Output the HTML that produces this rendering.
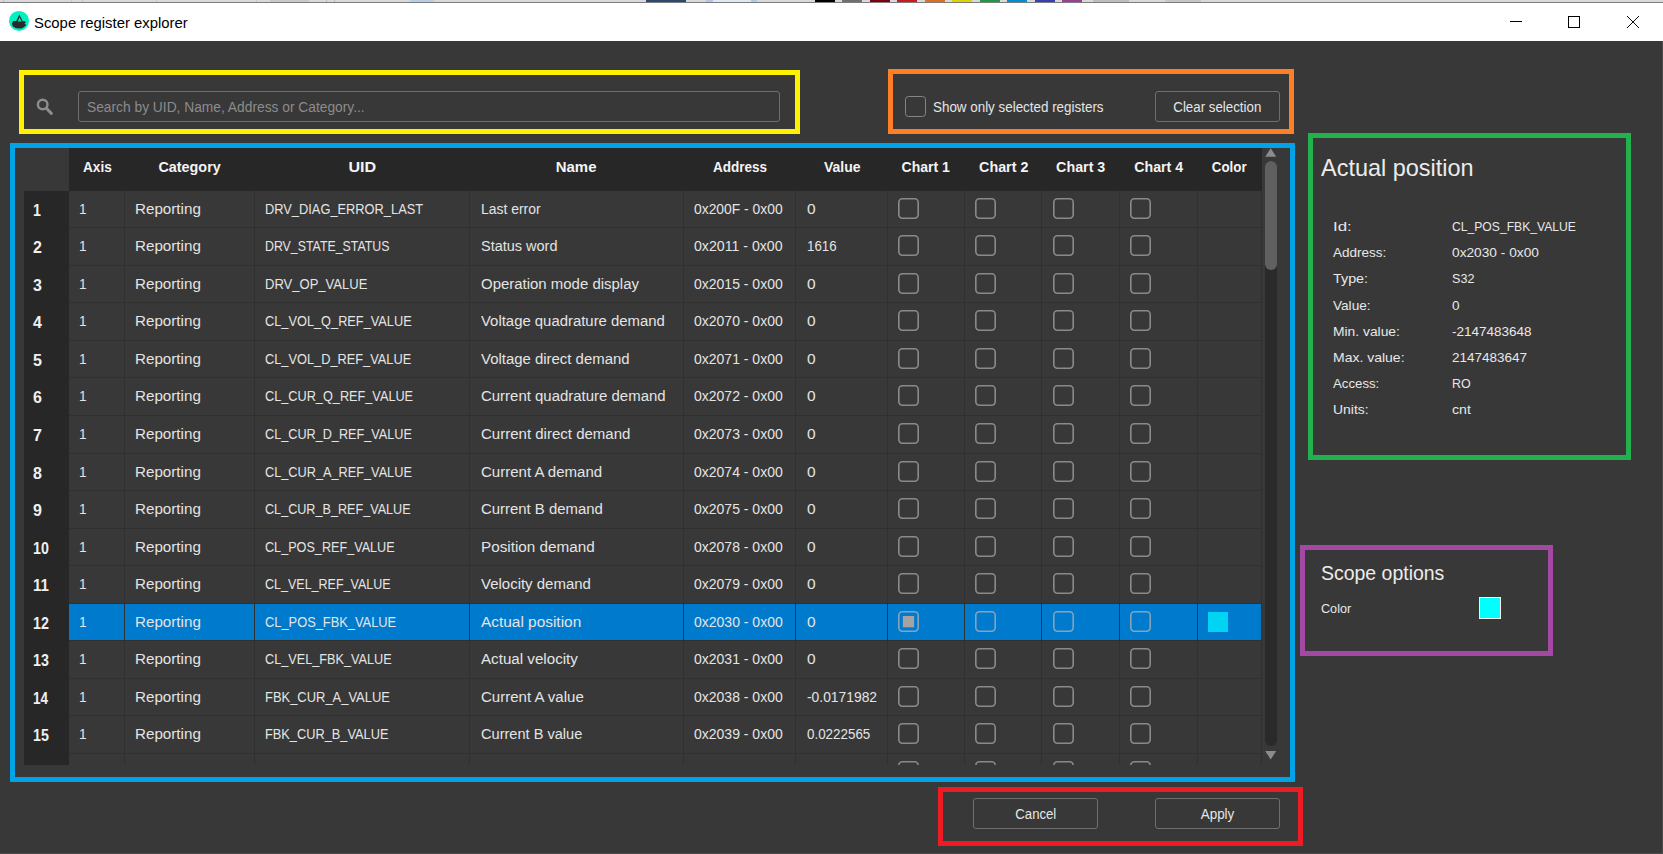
<!DOCTYPE html>
<html lang="en"><head><meta charset="utf-8"><title>Scope register explorer</title>
<style>
*{box-sizing:border-box;margin:0;padding:0}
html,body{width:1663px;height:854px;overflow:hidden;background:#383838}
body{position:relative;font-family:"Liberation Sans","DejaVu Sans",sans-serif;color:#e4e4e4;font-size:15px}
.abs{position:absolute}
.box{position:absolute;border:5px solid}
.t{position:absolute;white-space:nowrap;line-height:1}
.cell{position:absolute;top:0;height:100%;border-right:1px solid #303030;border-bottom:1px solid #303030;white-space:nowrap;padding-left:10px}
.row{position:absolute;left:69px;width:1192.5px;height:37.5px;line-height:35.6px;font-size:15.5px}
.row.sel{background:#007acd}
.rh{position:absolute;left:24px;width:45px;height:37.5px;line-height:39px;background:#272727;font-weight:bold;font-size:16px;padding-left:9px;color:#f0f0f0}
.cb{position:absolute;width:21px;height:21px;top:7.4px;left:10.5px;overflow:visible}
.hd{position:absolute;top:148px;height:43px;line-height:38px;text-align:center;font-weight:bold;font-size:15.5px;color:#f4f4f4;background:#272727}
.btn{position:absolute;height:31px;border:1px solid #6e6e6e;border-radius:3px;text-align:center;line-height:30px;font-size:14px;color:#e6e6e6}
.lbl{position:absolute;font-size:13.5px;line-height:16px;white-space:nowrap;color:#e8e8e8}
</style></head><body>

<div class="abs" style="left:0;top:0;width:1663px;height:2px;background:#d9d9d9"></div>
<div class="abs" style="left:815px;top:0;width:20px;height:2px;background:#000000"></div>
<div class="abs" style="left:842px;top:0;width:20px;height:2px;background:#6f6f6f"></div>
<div class="abs" style="left:870px;top:0;width:20px;height:2px;background:#7a0012"></div>
<div class="abs" style="left:897px;top:0;width:20px;height:2px;background:#cc1b1f"></div>
<div class="abs" style="left:925px;top:0;width:20px;height:2px;background:#e07020"></div>
<div class="abs" style="left:952px;top:0;width:20px;height:2px;background:#e0d400"></div>
<div class="abs" style="left:980px;top:0;width:20px;height:2px;background:#1e9a44"></div>
<div class="abs" style="left:1007px;top:0;width:20px;height:2px;background:#0090d0"></div>
<div class="abs" style="left:1035px;top:0;width:20px;height:2px;background:#3a40b0"></div>
<div class="abs" style="left:1062px;top:0;width:20px;height:2px;background:#9a409a"></div>
<div class="abs" style="left:3px;top:0;width:1px;height:2px;background:#c2c2c2"></div>
<div class="abs" style="left:71px;top:0;width:1px;height:2px;background:#c6c6c6"></div>
<div class="abs" style="left:82px;top:0;width:1px;height:2px;background:#c6c6c6"></div>
<div class="abs" style="left:156px;top:0;width:1px;height:2px;background:#c6c6c6"></div>
<div class="abs" style="left:256px;top:0;width:1px;height:2px;background:#c6c6c6"></div>
<div class="abs" style="left:270px;top:0;width:39px;height:2px;background:#c9c9c9"></div>
<div class="abs" style="left:326px;top:0;width:1px;height:2px;background:#bdbdbd"></div>
<div class="abs" style="left:334px;top:0;width:1px;height:2px;background:#bdbdbd"></div>
<div class="abs" style="left:410px;top:0;width:24px;height:2px;background:#b9cdea"></div>
<div class="abs" style="left:646px;top:0;width:40px;height:2px;background:#2c4a70"></div>
<div class="abs" style="left:706px;top:0;width:51px;height:2px;background:#b4c8e6"></div>
<div class="abs" style="left:713px;top:0;width:38px;height:2px;background:#dfe8f4"></div>
<div class="abs" style="left:1093px;top:0;width:36px;height:2px;background:#bdbdbd"></div>
<div class="abs" style="left:1165px;top:0;width:36px;height:2px;background:#c6c6c6"></div>
<div class="abs" style="left:0;top:2px;width:1663px;height:1px;background:#7c7c7c"></div>
<div class="abs" style="left:0;top:3px;width:1663px;height:38px;background:#ffffff"></div>
<svg class="abs" style="left:8px;top:10px" width="22" height="22" viewBox="0 0 22 22">
<defs><clipPath id="cc"><circle cx="11" cy="11" r="10"/></clipPath></defs>
<circle cx="11" cy="10.9" r="10" fill="#00f0c0"/>
<g clip-path="url(#cc)"><path fill-rule="evenodd" d="M11.3 4.6 L8.3 11.1 L5.2 10.9 L3.9 13.6 Q4.2 16 5.7 17 Q8 18.6 11 18.6 Q13.5 18.6 15.5 17.4 Q17.2 16.4 18.2 15.1 L16.5 13.6 L18 12.5 L16.8 11.2 L14.7 11.3 Z M11.5 7.3 L9.8 11.6 L13.5 11.6 Z" fill="#2a2a2a"/></g>
</svg>
<div class="t" style="left:34px;top:14.5px;font-size:15.5px;color:#000"><span style="display:inline-block;transform:scaleX(0.959);transform-origin:left center;">Scope register explorer</span></div>
<svg class="abs" style="left:1500px;top:10px" width="150" height="24" viewBox="0 0 150 24" shape-rendering="crispEdges">
<path d="M10 11.5 H22" stroke="#000" stroke-width="1" fill="none"/>
<rect x="68.5" y="6.5" width="11" height="11" stroke="#000" stroke-width="1" fill="none"/>
<path d="M127 6 L139 18 M139 6 L127 18" stroke="#000" stroke-width="0.95" fill="none" shape-rendering="geometricPrecision"/>
</svg>
<div class="box" style="left:19px;top:70px;width:781px;height:64px;border-color:#fff200"></div>
<div class="box" style="left:888px;top:69px;width:406px;height:65px;border-color:#ff7f27"></div>
<div class="box" style="left:10px;top:143px;width:1285px;height:639px;border-color:#00a2e8"></div>
<div class="box" style="left:1308px;top:133px;width:323px;height:327px;border-color:#22b14c"></div>
<div class="box" style="left:1300px;top:545px;width:253px;height:111px;border-color:#a349a4"></div>
<div class="box" style="left:938px;top:787px;width:365px;height:59px;border-color:#ed1c24"></div>
<svg class="abs" style="left:34px;top:96px" width="22" height="22" viewBox="0 0 22 22">
<circle cx="8.7" cy="8.5" r="4.8" stroke="#8e8e8e" stroke-width="2.4" fill="none"/>
<path d="M12.4 12.3 L17.3 17.4" stroke="#8e8e8e" stroke-width="3" stroke-linecap="round"/></svg>
<div class="abs" style="left:78px;top:91px;width:702px;height:31px;border:1px solid #6e6e6e;border-radius:3px"></div>
<div class="t" style="left:87px;top:100px;font-size:14px;color:#8c8c8c"><span style="display:inline-block;transform:scaleX(0.984);transform-origin:left center;">Search by UID, Name, Address or Category...</span></div>
<div class="abs" style="left:905px;top:96px;width:21px;height:21px;border:1px solid #858585;border-radius:3.5px"></div>
<div class="t" style="left:933px;top:99.5px;font-size:14px;color:#e6e6e6"><span style="display:inline-block;transform:scaleX(0.957);transform-origin:left center;">Show only selected registers</span></div>
<div class="btn" style="left:1155px;top:91px;width:125px"><span style="display:inline-block;transform:scaleX(0.950);transform-origin:center center;">Clear selection</span></div>
<div class="abs" style="left:15px;top:148px;width:1246.5px;height:617px;overflow:hidden">
<div class="abs" style="left:-15px;top:-148px;width:1663px;height:854px">
<div class="hd" style="left:69px;width:56px"><span style="display:inline-block;transform:scaleX(0.879);transform-origin:center center;">Axis</span></div>
<div class="hd" style="left:125px;width:129.5px"><span style="display:inline-block;transform:scaleX(0.926);transform-origin:center center;">Category</span></div>
<div class="hd" style="left:254.5px;width:215.0px"><span style="display:inline-block;transform:scaleX(1.038);transform-origin:center center;">UID</span></div>
<div class="hd" style="left:469.5px;width:214.0px"><span style="display:inline-block;transform:scaleX(0.963);transform-origin:center center;">Name</span></div>
<div class="hd" style="left:683.5px;width:112.5px"><span style="display:inline-block;transform:scaleX(0.873);transform-origin:center center;">Address</span></div>
<div class="hd" style="left:796px;width:91.5px"><span style="display:inline-block;transform:scaleX(0.903);transform-origin:center center;">Value</span></div>
<div class="hd" style="left:887.5px;width:77.0px"><span style="display:inline-block;transform:scaleX(0.904);transform-origin:center center;">Chart 1</span></div>
<div class="hd" style="left:964.5px;width:77.5px"><span style="display:inline-block;transform:scaleX(0.923);transform-origin:center center;">Chart 2</span></div>
<div class="hd" style="left:1042px;width:77.5px"><span style="display:inline-block;transform:scaleX(0.921);transform-origin:center center;">Chart 3</span></div>
<div class="hd" style="left:1119.5px;width:78.0px"><span style="display:inline-block;transform:scaleX(0.915);transform-origin:center center;">Chart 4</span></div>
<div class="hd" style="left:1197.5px;width:64.0px"><span style="display:inline-block;transform:scaleX(0.858);transform-origin:center center;">Color</span></div>
<div class="rh" style="top:191px;height:37px"><span style="display:inline-block;transform:scaleX(0.889);transform-origin:left center;">1</span></div>
<div class="row" style="top:191px;height:37px">
<div class="cell" style="left:0px;width:56px"><span style="display:inline-block;transform:scaleX(0.881);transform-origin:left center;">1</span></div>
<div class="cell" style="left:56px;width:129.5px"><span style="display:inline-block;transform:scaleX(0.980);transform-origin:left center;">Reporting</span></div>
<div class="cell" style="left:185.5px;width:215.0px"><span style="display:inline-block;transform:scaleX(0.828);transform-origin:left center;">DRV_DIAG_ERROR_LAST</span></div>
<div class="cell" style="left:400.5px;width:214.0px;padding-left:11px"><span style="display:inline-block;transform:scaleX(0.898);transform-origin:left center;">Last error</span></div>
<div class="cell" style="left:614.5px;width:112.5px"><span style="display:inline-block;transform:scaleX(0.894);transform-origin:left center;">0x200F - 0x00</span></div>
<div class="cell" style="left:727px;width:91.5px;padding-left:11px"><span>0</span></div>
<div class="cell" style="left:818.5px;width:77.0px"><svg class="cb" viewBox="0 0 21 21"><rect x="0.8" y="0.8" width="19.4" height="19.4" rx="3.6" fill="none" stroke="#8a8a8a" stroke-width="1.6"/></svg></div>
<div class="cell" style="left:895.5px;width:77.5px"><svg class="cb" viewBox="0 0 21 21"><rect x="0.8" y="0.8" width="19.4" height="19.4" rx="3.6" fill="none" stroke="#8a8a8a" stroke-width="1.6"/></svg></div>
<div class="cell" style="left:973px;width:77.5px"><svg class="cb" viewBox="0 0 21 21"><rect x="0.8" y="0.8" width="19.4" height="19.4" rx="3.6" fill="none" stroke="#8a8a8a" stroke-width="1.6"/></svg></div>
<div class="cell" style="left:1050.5px;width:78.0px"><svg class="cb" viewBox="0 0 21 21"><rect x="0.8" y="0.8" width="19.4" height="19.4" rx="3.6" fill="none" stroke="#8a8a8a" stroke-width="1.6"/></svg></div>
<div class="cell" style="left:1128.5px;width:64.0px"></div>
</div>
<div class="rh" style="top:228px;height:38px"><span>2</span></div>
<div class="row" style="top:228px;height:38px">
<div class="cell" style="left:0px;width:56px"><span style="display:inline-block;transform:scaleX(0.881);transform-origin:left center;">1</span></div>
<div class="cell" style="left:56px;width:129.5px"><span style="display:inline-block;transform:scaleX(0.980);transform-origin:left center;">Reporting</span></div>
<div class="cell" style="left:185.5px;width:215.0px"><span style="display:inline-block;transform:scaleX(0.797);transform-origin:left center;">DRV_STATE_STATUS</span></div>
<div class="cell" style="left:400.5px;width:214.0px;padding-left:11px"><span style="display:inline-block;transform:scaleX(0.934);transform-origin:left center;">Status word</span></div>
<div class="cell" style="left:614.5px;width:112.5px"><span style="display:inline-block;transform:scaleX(0.912);transform-origin:left center;">0x2011 - 0x00</span></div>
<div class="cell" style="left:727px;width:91.5px;padding-left:11px"><span style="display:inline-block;transform:scaleX(0.858);transform-origin:left center;">1616</span></div>
<div class="cell" style="left:818.5px;width:77.0px"><svg class="cb" viewBox="0 0 21 21"><rect x="0.8" y="0.8" width="19.4" height="19.4" rx="3.6" fill="none" stroke="#8a8a8a" stroke-width="1.6"/></svg></div>
<div class="cell" style="left:895.5px;width:77.5px"><svg class="cb" viewBox="0 0 21 21"><rect x="0.8" y="0.8" width="19.4" height="19.4" rx="3.6" fill="none" stroke="#8a8a8a" stroke-width="1.6"/></svg></div>
<div class="cell" style="left:973px;width:77.5px"><svg class="cb" viewBox="0 0 21 21"><rect x="0.8" y="0.8" width="19.4" height="19.4" rx="3.6" fill="none" stroke="#8a8a8a" stroke-width="1.6"/></svg></div>
<div class="cell" style="left:1050.5px;width:78.0px"><svg class="cb" viewBox="0 0 21 21"><rect x="0.8" y="0.8" width="19.4" height="19.4" rx="3.6" fill="none" stroke="#8a8a8a" stroke-width="1.6"/></svg></div>
<div class="cell" style="left:1128.5px;width:64.0px"></div>
</div>
<div class="rh" style="top:266px;height:37px"><span>3</span></div>
<div class="row" style="top:266px;height:37px">
<div class="cell" style="left:0px;width:56px"><span style="display:inline-block;transform:scaleX(0.881);transform-origin:left center;">1</span></div>
<div class="cell" style="left:56px;width:129.5px"><span style="display:inline-block;transform:scaleX(0.980);transform-origin:left center;">Reporting</span></div>
<div class="cell" style="left:185.5px;width:215.0px"><span style="display:inline-block;transform:scaleX(0.841);transform-origin:left center;">DRV_OP_VALUE</span></div>
<div class="cell" style="left:400.5px;width:214.0px;padding-left:11px"><span style="display:inline-block;transform:scaleX(0.965);transform-origin:left center;">Operation mode display</span></div>
<div class="cell" style="left:614.5px;width:112.5px"><span style="display:inline-block;transform:scaleX(0.903);transform-origin:left center;">0x2015 - 0x00</span></div>
<div class="cell" style="left:727px;width:91.5px;padding-left:11px"><span>0</span></div>
<div class="cell" style="left:818.5px;width:77.0px"><svg class="cb" viewBox="0 0 21 21"><rect x="0.8" y="0.8" width="19.4" height="19.4" rx="3.6" fill="none" stroke="#8a8a8a" stroke-width="1.6"/></svg></div>
<div class="cell" style="left:895.5px;width:77.5px"><svg class="cb" viewBox="0 0 21 21"><rect x="0.8" y="0.8" width="19.4" height="19.4" rx="3.6" fill="none" stroke="#8a8a8a" stroke-width="1.6"/></svg></div>
<div class="cell" style="left:973px;width:77.5px"><svg class="cb" viewBox="0 0 21 21"><rect x="0.8" y="0.8" width="19.4" height="19.4" rx="3.6" fill="none" stroke="#8a8a8a" stroke-width="1.6"/></svg></div>
<div class="cell" style="left:1050.5px;width:78.0px"><svg class="cb" viewBox="0 0 21 21"><rect x="0.8" y="0.8" width="19.4" height="19.4" rx="3.6" fill="none" stroke="#8a8a8a" stroke-width="1.6"/></svg></div>
<div class="cell" style="left:1128.5px;width:64.0px"></div>
</div>
<div class="rh" style="top:303px;height:38px"><span>4</span></div>
<div class="row" style="top:303px;height:38px">
<div class="cell" style="left:0px;width:56px"><span style="display:inline-block;transform:scaleX(0.881);transform-origin:left center;">1</span></div>
<div class="cell" style="left:56px;width:129.5px"><span style="display:inline-block;transform:scaleX(0.980);transform-origin:left center;">Reporting</span></div>
<div class="cell" style="left:185.5px;width:215.0px"><span style="display:inline-block;transform:scaleX(0.824);transform-origin:left center;">CL_VOL_Q_REF_VALUE</span></div>
<div class="cell" style="left:400.5px;width:214.0px;padding-left:11px"><span style="display:inline-block;transform:scaleX(0.961);transform-origin:left center;">Voltage quadrature demand</span></div>
<div class="cell" style="left:614.5px;width:112.5px"><span style="display:inline-block;transform:scaleX(0.903);transform-origin:left center;">0x2070 - 0x00</span></div>
<div class="cell" style="left:727px;width:91.5px;padding-left:11px"><span>0</span></div>
<div class="cell" style="left:818.5px;width:77.0px"><svg class="cb" viewBox="0 0 21 21"><rect x="0.8" y="0.8" width="19.4" height="19.4" rx="3.6" fill="none" stroke="#8a8a8a" stroke-width="1.6"/></svg></div>
<div class="cell" style="left:895.5px;width:77.5px"><svg class="cb" viewBox="0 0 21 21"><rect x="0.8" y="0.8" width="19.4" height="19.4" rx="3.6" fill="none" stroke="#8a8a8a" stroke-width="1.6"/></svg></div>
<div class="cell" style="left:973px;width:77.5px"><svg class="cb" viewBox="0 0 21 21"><rect x="0.8" y="0.8" width="19.4" height="19.4" rx="3.6" fill="none" stroke="#8a8a8a" stroke-width="1.6"/></svg></div>
<div class="cell" style="left:1050.5px;width:78.0px"><svg class="cb" viewBox="0 0 21 21"><rect x="0.8" y="0.8" width="19.4" height="19.4" rx="3.6" fill="none" stroke="#8a8a8a" stroke-width="1.6"/></svg></div>
<div class="cell" style="left:1128.5px;width:64.0px"></div>
</div>
<div class="rh" style="top:341px;height:37px"><span>5</span></div>
<div class="row" style="top:341px;height:37px">
<div class="cell" style="left:0px;width:56px"><span style="display:inline-block;transform:scaleX(0.881);transform-origin:left center;">1</span></div>
<div class="cell" style="left:56px;width:129.5px"><span style="display:inline-block;transform:scaleX(0.980);transform-origin:left center;">Reporting</span></div>
<div class="cell" style="left:185.5px;width:215.0px"><span style="display:inline-block;transform:scaleX(0.825);transform-origin:left center;">CL_VOL_D_REF_VALUE</span></div>
<div class="cell" style="left:400.5px;width:214.0px;padding-left:11px"><span style="display:inline-block;transform:scaleX(0.963);transform-origin:left center;">Voltage direct demand</span></div>
<div class="cell" style="left:614.5px;width:112.5px"><span style="display:inline-block;transform:scaleX(0.903);transform-origin:left center;">0x2071 - 0x00</span></div>
<div class="cell" style="left:727px;width:91.5px;padding-left:11px"><span>0</span></div>
<div class="cell" style="left:818.5px;width:77.0px"><svg class="cb" viewBox="0 0 21 21"><rect x="0.8" y="0.8" width="19.4" height="19.4" rx="3.6" fill="none" stroke="#8a8a8a" stroke-width="1.6"/></svg></div>
<div class="cell" style="left:895.5px;width:77.5px"><svg class="cb" viewBox="0 0 21 21"><rect x="0.8" y="0.8" width="19.4" height="19.4" rx="3.6" fill="none" stroke="#8a8a8a" stroke-width="1.6"/></svg></div>
<div class="cell" style="left:973px;width:77.5px"><svg class="cb" viewBox="0 0 21 21"><rect x="0.8" y="0.8" width="19.4" height="19.4" rx="3.6" fill="none" stroke="#8a8a8a" stroke-width="1.6"/></svg></div>
<div class="cell" style="left:1050.5px;width:78.0px"><svg class="cb" viewBox="0 0 21 21"><rect x="0.8" y="0.8" width="19.4" height="19.4" rx="3.6" fill="none" stroke="#8a8a8a" stroke-width="1.6"/></svg></div>
<div class="cell" style="left:1128.5px;width:64.0px"></div>
</div>
<div class="rh" style="top:378px;height:38px"><span>6</span></div>
<div class="row" style="top:378px;height:38px">
<div class="cell" style="left:0px;width:56px"><span style="display:inline-block;transform:scaleX(0.881);transform-origin:left center;">1</span></div>
<div class="cell" style="left:56px;width:129.5px"><span style="display:inline-block;transform:scaleX(0.980);transform-origin:left center;">Reporting</span></div>
<div class="cell" style="left:185.5px;width:215.0px"><span style="display:inline-block;transform:scaleX(0.820);transform-origin:left center;">CL_CUR_Q_REF_VALUE</span></div>
<div class="cell" style="left:400.5px;width:214.0px;padding-left:11px"><span style="display:inline-block;transform:scaleX(0.965);transform-origin:left center;">Current quadrature demand</span></div>
<div class="cell" style="left:614.5px;width:112.5px"><span style="display:inline-block;transform:scaleX(0.903);transform-origin:left center;">0x2072 - 0x00</span></div>
<div class="cell" style="left:727px;width:91.5px;padding-left:11px"><span>0</span></div>
<div class="cell" style="left:818.5px;width:77.0px"><svg class="cb" viewBox="0 0 21 21"><rect x="0.8" y="0.8" width="19.4" height="19.4" rx="3.6" fill="none" stroke="#8a8a8a" stroke-width="1.6"/></svg></div>
<div class="cell" style="left:895.5px;width:77.5px"><svg class="cb" viewBox="0 0 21 21"><rect x="0.8" y="0.8" width="19.4" height="19.4" rx="3.6" fill="none" stroke="#8a8a8a" stroke-width="1.6"/></svg></div>
<div class="cell" style="left:973px;width:77.5px"><svg class="cb" viewBox="0 0 21 21"><rect x="0.8" y="0.8" width="19.4" height="19.4" rx="3.6" fill="none" stroke="#8a8a8a" stroke-width="1.6"/></svg></div>
<div class="cell" style="left:1050.5px;width:78.0px"><svg class="cb" viewBox="0 0 21 21"><rect x="0.8" y="0.8" width="19.4" height="19.4" rx="3.6" fill="none" stroke="#8a8a8a" stroke-width="1.6"/></svg></div>
<div class="cell" style="left:1128.5px;width:64.0px"></div>
</div>
<div class="rh" style="top:416px;height:38px"><span>7</span></div>
<div class="row" style="top:416px;height:38px">
<div class="cell" style="left:0px;width:56px"><span style="display:inline-block;transform:scaleX(0.881);transform-origin:left center;">1</span></div>
<div class="cell" style="left:56px;width:129.5px"><span style="display:inline-block;transform:scaleX(0.980);transform-origin:left center;">Reporting</span></div>
<div class="cell" style="left:185.5px;width:215.0px"><span style="display:inline-block;transform:scaleX(0.817);transform-origin:left center;">CL_CUR_D_REF_VALUE</span></div>
<div class="cell" style="left:400.5px;width:214.0px;padding-left:11px"><span style="display:inline-block;transform:scaleX(0.969);transform-origin:left center;">Current direct demand</span></div>
<div class="cell" style="left:614.5px;width:112.5px"><span style="display:inline-block;transform:scaleX(0.903);transform-origin:left center;">0x2073 - 0x00</span></div>
<div class="cell" style="left:727px;width:91.5px;padding-left:11px"><span>0</span></div>
<div class="cell" style="left:818.5px;width:77.0px"><svg class="cb" viewBox="0 0 21 21"><rect x="0.8" y="0.8" width="19.4" height="19.4" rx="3.6" fill="none" stroke="#8a8a8a" stroke-width="1.6"/></svg></div>
<div class="cell" style="left:895.5px;width:77.5px"><svg class="cb" viewBox="0 0 21 21"><rect x="0.8" y="0.8" width="19.4" height="19.4" rx="3.6" fill="none" stroke="#8a8a8a" stroke-width="1.6"/></svg></div>
<div class="cell" style="left:973px;width:77.5px"><svg class="cb" viewBox="0 0 21 21"><rect x="0.8" y="0.8" width="19.4" height="19.4" rx="3.6" fill="none" stroke="#8a8a8a" stroke-width="1.6"/></svg></div>
<div class="cell" style="left:1050.5px;width:78.0px"><svg class="cb" viewBox="0 0 21 21"><rect x="0.8" y="0.8" width="19.4" height="19.4" rx="3.6" fill="none" stroke="#8a8a8a" stroke-width="1.6"/></svg></div>
<div class="cell" style="left:1128.5px;width:64.0px"></div>
</div>
<div class="rh" style="top:454px;height:37px"><span>8</span></div>
<div class="row" style="top:454px;height:37px">
<div class="cell" style="left:0px;width:56px"><span style="display:inline-block;transform:scaleX(0.881);transform-origin:left center;">1</span></div>
<div class="cell" style="left:56px;width:129.5px"><span style="display:inline-block;transform:scaleX(0.980);transform-origin:left center;">Reporting</span></div>
<div class="cell" style="left:185.5px;width:215.0px"><span style="display:inline-block;transform:scaleX(0.821);transform-origin:left center;">CL_CUR_A_REF_VALUE</span></div>
<div class="cell" style="left:400.5px;width:214.0px;padding-left:11px"><span style="display:inline-block;transform:scaleX(0.970);transform-origin:left center;">Current A demand</span></div>
<div class="cell" style="left:614.5px;width:112.5px"><span style="display:inline-block;transform:scaleX(0.903);transform-origin:left center;">0x2074 - 0x00</span></div>
<div class="cell" style="left:727px;width:91.5px;padding-left:11px"><span>0</span></div>
<div class="cell" style="left:818.5px;width:77.0px"><svg class="cb" viewBox="0 0 21 21"><rect x="0.8" y="0.8" width="19.4" height="19.4" rx="3.6" fill="none" stroke="#8a8a8a" stroke-width="1.6"/></svg></div>
<div class="cell" style="left:895.5px;width:77.5px"><svg class="cb" viewBox="0 0 21 21"><rect x="0.8" y="0.8" width="19.4" height="19.4" rx="3.6" fill="none" stroke="#8a8a8a" stroke-width="1.6"/></svg></div>
<div class="cell" style="left:973px;width:77.5px"><svg class="cb" viewBox="0 0 21 21"><rect x="0.8" y="0.8" width="19.4" height="19.4" rx="3.6" fill="none" stroke="#8a8a8a" stroke-width="1.6"/></svg></div>
<div class="cell" style="left:1050.5px;width:78.0px"><svg class="cb" viewBox="0 0 21 21"><rect x="0.8" y="0.8" width="19.4" height="19.4" rx="3.6" fill="none" stroke="#8a8a8a" stroke-width="1.6"/></svg></div>
<div class="cell" style="left:1128.5px;width:64.0px"></div>
</div>
<div class="rh" style="top:491px;height:38px"><span>9</span></div>
<div class="row" style="top:491px;height:38px">
<div class="cell" style="left:0px;width:56px"><span style="display:inline-block;transform:scaleX(0.881);transform-origin:left center;">1</span></div>
<div class="cell" style="left:56px;width:129.5px"><span style="display:inline-block;transform:scaleX(0.980);transform-origin:left center;">Reporting</span></div>
<div class="cell" style="left:185.5px;width:215.0px"><span style="display:inline-block;transform:scaleX(0.814);transform-origin:left center;">CL_CUR_B_REF_VALUE</span></div>
<div class="cell" style="left:400.5px;width:214.0px;padding-left:11px"><span style="display:inline-block;transform:scaleX(0.962);transform-origin:left center;">Current B demand</span></div>
<div class="cell" style="left:614.5px;width:112.5px"><span style="display:inline-block;transform:scaleX(0.903);transform-origin:left center;">0x2075 - 0x00</span></div>
<div class="cell" style="left:727px;width:91.5px;padding-left:11px"><span>0</span></div>
<div class="cell" style="left:818.5px;width:77.0px"><svg class="cb" viewBox="0 0 21 21"><rect x="0.8" y="0.8" width="19.4" height="19.4" rx="3.6" fill="none" stroke="#8a8a8a" stroke-width="1.6"/></svg></div>
<div class="cell" style="left:895.5px;width:77.5px"><svg class="cb" viewBox="0 0 21 21"><rect x="0.8" y="0.8" width="19.4" height="19.4" rx="3.6" fill="none" stroke="#8a8a8a" stroke-width="1.6"/></svg></div>
<div class="cell" style="left:973px;width:77.5px"><svg class="cb" viewBox="0 0 21 21"><rect x="0.8" y="0.8" width="19.4" height="19.4" rx="3.6" fill="none" stroke="#8a8a8a" stroke-width="1.6"/></svg></div>
<div class="cell" style="left:1050.5px;width:78.0px"><svg class="cb" viewBox="0 0 21 21"><rect x="0.8" y="0.8" width="19.4" height="19.4" rx="3.6" fill="none" stroke="#8a8a8a" stroke-width="1.6"/></svg></div>
<div class="cell" style="left:1128.5px;width:64.0px"></div>
</div>
<div class="rh" style="top:529px;height:37px"><span style="display:inline-block;transform:scaleX(0.889);transform-origin:left center;">10</span></div>
<div class="row" style="top:529px;height:37px">
<div class="cell" style="left:0px;width:56px"><span style="display:inline-block;transform:scaleX(0.881);transform-origin:left center;">1</span></div>
<div class="cell" style="left:56px;width:129.5px"><span style="display:inline-block;transform:scaleX(0.980);transform-origin:left center;">Reporting</span></div>
<div class="cell" style="left:185.5px;width:215.0px"><span style="display:inline-block;transform:scaleX(0.815);transform-origin:left center;">CL_POS_REF_VALUE</span></div>
<div class="cell" style="left:400.5px;width:214.0px;padding-left:11px"><span style="display:inline-block;transform:scaleX(0.984);transform-origin:left center;">Position demand</span></div>
<div class="cell" style="left:614.5px;width:112.5px"><span style="display:inline-block;transform:scaleX(0.903);transform-origin:left center;">0x2078 - 0x00</span></div>
<div class="cell" style="left:727px;width:91.5px;padding-left:11px"><span>0</span></div>
<div class="cell" style="left:818.5px;width:77.0px"><svg class="cb" viewBox="0 0 21 21"><rect x="0.8" y="0.8" width="19.4" height="19.4" rx="3.6" fill="none" stroke="#8a8a8a" stroke-width="1.6"/></svg></div>
<div class="cell" style="left:895.5px;width:77.5px"><svg class="cb" viewBox="0 0 21 21"><rect x="0.8" y="0.8" width="19.4" height="19.4" rx="3.6" fill="none" stroke="#8a8a8a" stroke-width="1.6"/></svg></div>
<div class="cell" style="left:973px;width:77.5px"><svg class="cb" viewBox="0 0 21 21"><rect x="0.8" y="0.8" width="19.4" height="19.4" rx="3.6" fill="none" stroke="#8a8a8a" stroke-width="1.6"/></svg></div>
<div class="cell" style="left:1050.5px;width:78.0px"><svg class="cb" viewBox="0 0 21 21"><rect x="0.8" y="0.8" width="19.4" height="19.4" rx="3.6" fill="none" stroke="#8a8a8a" stroke-width="1.6"/></svg></div>
<div class="cell" style="left:1128.5px;width:64.0px"></div>
</div>
<div class="rh" style="top:566px;height:38px"><span style="display:inline-block;transform:scaleX(0.941);transform-origin:left center;">11</span></div>
<div class="row" style="top:566px;height:38px">
<div class="cell" style="left:0px;width:56px"><span style="display:inline-block;transform:scaleX(0.881);transform-origin:left center;">1</span></div>
<div class="cell" style="left:56px;width:129.5px"><span style="display:inline-block;transform:scaleX(0.980);transform-origin:left center;">Reporting</span></div>
<div class="cell" style="left:185.5px;width:215.0px"><span style="display:inline-block;transform:scaleX(0.807);transform-origin:left center;">CL_VEL_REF_VALUE</span></div>
<div class="cell" style="left:400.5px;width:214.0px;padding-left:11px"><span style="display:inline-block;transform:scaleX(0.966);transform-origin:left center;">Velocity demand</span></div>
<div class="cell" style="left:614.5px;width:112.5px"><span style="display:inline-block;transform:scaleX(0.903);transform-origin:left center;">0x2079 - 0x00</span></div>
<div class="cell" style="left:727px;width:91.5px;padding-left:11px"><span>0</span></div>
<div class="cell" style="left:818.5px;width:77.0px"><svg class="cb" viewBox="0 0 21 21"><rect x="0.8" y="0.8" width="19.4" height="19.4" rx="3.6" fill="none" stroke="#8a8a8a" stroke-width="1.6"/></svg></div>
<div class="cell" style="left:895.5px;width:77.5px"><svg class="cb" viewBox="0 0 21 21"><rect x="0.8" y="0.8" width="19.4" height="19.4" rx="3.6" fill="none" stroke="#8a8a8a" stroke-width="1.6"/></svg></div>
<div class="cell" style="left:973px;width:77.5px"><svg class="cb" viewBox="0 0 21 21"><rect x="0.8" y="0.8" width="19.4" height="19.4" rx="3.6" fill="none" stroke="#8a8a8a" stroke-width="1.6"/></svg></div>
<div class="cell" style="left:1050.5px;width:78.0px"><svg class="cb" viewBox="0 0 21 21"><rect x="0.8" y="0.8" width="19.4" height="19.4" rx="3.6" fill="none" stroke="#8a8a8a" stroke-width="1.6"/></svg></div>
<div class="cell" style="left:1128.5px;width:64.0px"></div>
</div>
<div class="rh" style="top:604px;height:37px"><span style="display:inline-block;transform:scaleX(0.889);transform-origin:left center;">12</span></div>
<div class="row sel" style="top:604px;height:37px">
<div class="cell" style="left:0px;width:56px"><span style="display:inline-block;transform:scaleX(0.881);transform-origin:left center;">1</span></div>
<div class="cell" style="left:56px;width:129.5px"><span style="display:inline-block;transform:scaleX(0.980);transform-origin:left center;">Reporting</span></div>
<div class="cell" style="left:185.5px;width:215.0px"><span style="display:inline-block;transform:scaleX(0.829);transform-origin:left center;">CL_POS_FBK_VALUE</span></div>
<div class="cell" style="left:400.5px;width:214.0px;padding-left:11px"><span style="display:inline-block;transform:scaleX(0.994);transform-origin:left center;">Actual position</span></div>
<div class="cell" style="left:614.5px;width:112.5px"><span style="display:inline-block;transform:scaleX(0.903);transform-origin:left center;">0x2030 - 0x00</span></div>
<div class="cell" style="left:727px;width:91.5px;padding-left:11px"><span>0</span></div>
<div class="cell" style="left:818.5px;width:77.0px"><svg class="cb" viewBox="0 0 21 21"><rect x="0.8" y="0.8" width="19.4" height="19.4" rx="3.6" fill="none" stroke="#86a3bd" stroke-width="1.6"/><rect x="4.8" y="5" width="11.3" height="11.3" fill="#a6a2a2"/></svg></div>
<div class="cell" style="left:895.5px;width:77.5px"><svg class="cb" viewBox="0 0 21 21"><rect x="0.8" y="0.8" width="19.4" height="19.4" rx="3.6" fill="none" stroke="#86a3bd" stroke-width="1.6"/></svg></div>
<div class="cell" style="left:973px;width:77.5px"><svg class="cb" viewBox="0 0 21 21"><rect x="0.8" y="0.8" width="19.4" height="19.4" rx="3.6" fill="none" stroke="#86a3bd" stroke-width="1.6"/></svg></div>
<div class="cell" style="left:1050.5px;width:78.0px"><svg class="cb" viewBox="0 0 21 21"><rect x="0.8" y="0.8" width="19.4" height="19.4" rx="3.6" fill="none" stroke="#86a3bd" stroke-width="1.6"/></svg></div>
<div class="cell" style="left:1128.5px;width:64.0px"><span class="abs" style="left:10.5px;top:8px;width:20px;height:20px;background:#00d4f2"></span></div>
</div>
<div class="rh" style="top:641px;height:38px"><span style="display:inline-block;transform:scaleX(0.889);transform-origin:left center;">13</span></div>
<div class="row" style="top:641px;height:38px">
<div class="cell" style="left:0px;width:56px"><span style="display:inline-block;transform:scaleX(0.881);transform-origin:left center;">1</span></div>
<div class="cell" style="left:56px;width:129.5px"><span style="display:inline-block;transform:scaleX(0.980);transform-origin:left center;">Reporting</span></div>
<div class="cell" style="left:185.5px;width:215.0px"><span style="display:inline-block;transform:scaleX(0.818);transform-origin:left center;">CL_VEL_FBK_VALUE</span></div>
<div class="cell" style="left:400.5px;width:214.0px;padding-left:11px"><span style="display:inline-block;transform:scaleX(0.978);transform-origin:left center;">Actual velocity</span></div>
<div class="cell" style="left:614.5px;width:112.5px"><span style="display:inline-block;transform:scaleX(0.903);transform-origin:left center;">0x2031 - 0x00</span></div>
<div class="cell" style="left:727px;width:91.5px;padding-left:11px"><span>0</span></div>
<div class="cell" style="left:818.5px;width:77.0px"><svg class="cb" viewBox="0 0 21 21"><rect x="0.8" y="0.8" width="19.4" height="19.4" rx="3.6" fill="none" stroke="#8a8a8a" stroke-width="1.6"/></svg></div>
<div class="cell" style="left:895.5px;width:77.5px"><svg class="cb" viewBox="0 0 21 21"><rect x="0.8" y="0.8" width="19.4" height="19.4" rx="3.6" fill="none" stroke="#8a8a8a" stroke-width="1.6"/></svg></div>
<div class="cell" style="left:973px;width:77.5px"><svg class="cb" viewBox="0 0 21 21"><rect x="0.8" y="0.8" width="19.4" height="19.4" rx="3.6" fill="none" stroke="#8a8a8a" stroke-width="1.6"/></svg></div>
<div class="cell" style="left:1050.5px;width:78.0px"><svg class="cb" viewBox="0 0 21 21"><rect x="0.8" y="0.8" width="19.4" height="19.4" rx="3.6" fill="none" stroke="#8a8a8a" stroke-width="1.6"/></svg></div>
<div class="cell" style="left:1128.5px;width:64.0px"></div>
</div>
<div class="rh" style="top:679px;height:37px"><span style="display:inline-block;transform:scaleX(0.842);transform-origin:left center;">14</span></div>
<div class="row" style="top:679px;height:37px">
<div class="cell" style="left:0px;width:56px"><span style="display:inline-block;transform:scaleX(0.881);transform-origin:left center;">1</span></div>
<div class="cell" style="left:56px;width:129.5px"><span style="display:inline-block;transform:scaleX(0.980);transform-origin:left center;">Reporting</span></div>
<div class="cell" style="left:185.5px;width:215.0px"><span style="display:inline-block;transform:scaleX(0.835);transform-origin:left center;">FBK_CUR_A_VALUE</span></div>
<div class="cell" style="left:400.5px;width:214.0px;padding-left:11px"><span style="display:inline-block;transform:scaleX(0.970);transform-origin:left center;">Current A value</span></div>
<div class="cell" style="left:614.5px;width:112.5px"><span style="display:inline-block;transform:scaleX(0.903);transform-origin:left center;">0x2038 - 0x00</span></div>
<div class="cell" style="left:727px;width:91.5px;padding-left:11px"><span style="display:inline-block;transform:scaleX(0.893);transform-origin:left center;">-0.0171982</span></div>
<div class="cell" style="left:818.5px;width:77.0px"><svg class="cb" viewBox="0 0 21 21"><rect x="0.8" y="0.8" width="19.4" height="19.4" rx="3.6" fill="none" stroke="#8a8a8a" stroke-width="1.6"/></svg></div>
<div class="cell" style="left:895.5px;width:77.5px"><svg class="cb" viewBox="0 0 21 21"><rect x="0.8" y="0.8" width="19.4" height="19.4" rx="3.6" fill="none" stroke="#8a8a8a" stroke-width="1.6"/></svg></div>
<div class="cell" style="left:973px;width:77.5px"><svg class="cb" viewBox="0 0 21 21"><rect x="0.8" y="0.8" width="19.4" height="19.4" rx="3.6" fill="none" stroke="#8a8a8a" stroke-width="1.6"/></svg></div>
<div class="cell" style="left:1050.5px;width:78.0px"><svg class="cb" viewBox="0 0 21 21"><rect x="0.8" y="0.8" width="19.4" height="19.4" rx="3.6" fill="none" stroke="#8a8a8a" stroke-width="1.6"/></svg></div>
<div class="cell" style="left:1128.5px;width:64.0px"></div>
</div>
<div class="rh" style="top:716px;height:38px"><span style="display:inline-block;transform:scaleX(0.889);transform-origin:left center;">15</span></div>
<div class="row" style="top:716px;height:38px">
<div class="cell" style="left:0px;width:56px"><span style="display:inline-block;transform:scaleX(0.881);transform-origin:left center;">1</span></div>
<div class="cell" style="left:56px;width:129.5px"><span style="display:inline-block;transform:scaleX(0.980);transform-origin:left center;">Reporting</span></div>
<div class="cell" style="left:185.5px;width:215.0px"><span style="display:inline-block;transform:scaleX(0.825);transform-origin:left center;">FBK_CUR_B_VALUE</span></div>
<div class="cell" style="left:400.5px;width:214.0px;padding-left:11px"><span style="display:inline-block;transform:scaleX(0.940);transform-origin:left center;">Current B value</span></div>
<div class="cell" style="left:614.5px;width:112.5px"><span style="display:inline-block;transform:scaleX(0.903);transform-origin:left center;">0x2039 - 0x00</span></div>
<div class="cell" style="left:727px;width:91.5px;padding-left:11px"><span style="display:inline-block;transform:scaleX(0.864);transform-origin:left center;">0.0222565</span></div>
<div class="cell" style="left:818.5px;width:77.0px"><svg class="cb" viewBox="0 0 21 21"><rect x="0.8" y="0.8" width="19.4" height="19.4" rx="3.6" fill="none" stroke="#8a8a8a" stroke-width="1.6"/></svg></div>
<div class="cell" style="left:895.5px;width:77.5px"><svg class="cb" viewBox="0 0 21 21"><rect x="0.8" y="0.8" width="19.4" height="19.4" rx="3.6" fill="none" stroke="#8a8a8a" stroke-width="1.6"/></svg></div>
<div class="cell" style="left:973px;width:77.5px"><svg class="cb" viewBox="0 0 21 21"><rect x="0.8" y="0.8" width="19.4" height="19.4" rx="3.6" fill="none" stroke="#8a8a8a" stroke-width="1.6"/></svg></div>
<div class="cell" style="left:1050.5px;width:78.0px"><svg class="cb" viewBox="0 0 21 21"><rect x="0.8" y="0.8" width="19.4" height="19.4" rx="3.6" fill="none" stroke="#8a8a8a" stroke-width="1.6"/></svg></div>
<div class="cell" style="left:1128.5px;width:64.0px"></div>
</div>
<div class="rh" style="top:754px;height:37px"></div>
<div class="row" style="top:754px;height:37px">
<div class="cell" style="left:0px;width:56px"></div>
<div class="cell" style="left:56px;width:129.5px"></div>
<div class="cell" style="left:185.5px;width:215.0px"></div>
<div class="cell" style="left:400.5px;width:214.0px;padding-left:11px"></div>
<div class="cell" style="left:614.5px;width:112.5px"></div>
<div class="cell" style="left:727px;width:91.5px;padding-left:11px"></div>
<div class="cell" style="left:818.5px;width:77.0px"><svg class="cb" viewBox="0 0 21 21"><rect x="0.8" y="0.8" width="19.4" height="19.4" rx="3.6" fill="none" stroke="#8a8a8a" stroke-width="1.6"/></svg></div>
<div class="cell" style="left:895.5px;width:77.5px"><svg class="cb" viewBox="0 0 21 21"><rect x="0.8" y="0.8" width="19.4" height="19.4" rx="3.6" fill="none" stroke="#8a8a8a" stroke-width="1.6"/></svg></div>
<div class="cell" style="left:973px;width:77.5px"><svg class="cb" viewBox="0 0 21 21"><rect x="0.8" y="0.8" width="19.4" height="19.4" rx="3.6" fill="none" stroke="#8a8a8a" stroke-width="1.6"/></svg></div>
<div class="cell" style="left:1050.5px;width:78.0px"><svg class="cb" viewBox="0 0 21 21"><rect x="0.8" y="0.8" width="19.4" height="19.4" rx="3.6" fill="none" stroke="#8a8a8a" stroke-width="1.6"/></svg></div>
<div class="cell" style="left:1128.5px;width:64.0px"></div>
</div>
</div></div>
<div class="abs" style="left:1265px;top:161px;width:12px;height:585px;border-radius:6px;background:#2a2a2a"></div>
<div class="abs" style="left:1265px;top:161px;width:12px;height:109px;border-radius:6px;background:#606060"></div>
<svg class="abs" style="left:1264px;top:147px" width="14" height="11" viewBox="0 0 14 11"><path d="M1.2 9.8 L6.7 1.3 L12.2 9.8 Z" fill="#8c8c8c"/></svg>
<svg class="abs" style="left:1264px;top:750px" width="14" height="11" viewBox="0 0 14 11"><path d="M1.2 1 L6.7 9.6 L12.2 1 Z" fill="#8c8c8c"/></svg>
<div class="t" style="left:1321px;top:156px;font-size:24px;color:#ececec"><span style="display:inline-block;transform:scaleX(0.978);transform-origin:left center;">Actual position</span></div>
<div class="lbl" style="left:1333px;top:219.0px"><span style="display:inline-block;transform:scaleX(1.252);transform-origin:left center;">Id:</span></div>
<div class="lbl" style="left:1452px;top:219.0px"><span style="display:inline-block;transform:scaleX(0.899);transform-origin:left center;">CL_POS_FBK_VALUE</span></div>
<div class="lbl" style="left:1333px;top:245.2px"><span>Address:</span></div>
<div class="lbl" style="left:1452px;top:245.2px"><span style="display:inline-block;transform:scaleX(1.016);transform-origin:left center;">0x2030 - 0x00</span></div>
<div class="lbl" style="left:1333px;top:271.4px"><span style="display:inline-block;transform:scaleX(1.062);transform-origin:left center;">Type:</span></div>
<div class="lbl" style="left:1452px;top:271.4px"><span style="display:inline-block;transform:scaleX(0.935);transform-origin:left center;">S32</span></div>
<div class="lbl" style="left:1333px;top:297.6px"><span style="display:inline-block;transform:scaleX(1.007);transform-origin:left center;">Value:</span></div>
<div class="lbl" style="left:1452px;top:297.6px"><span>0</span></div>
<div class="lbl" style="left:1333px;top:323.8px"><span style="display:inline-block;transform:scaleX(1.025);transform-origin:left center;">Min. value:</span></div>
<div class="lbl" style="left:1452px;top:323.8px"><span>-2147483648</span></div>
<div class="lbl" style="left:1333px;top:350.0px"><span style="display:inline-block;transform:scaleX(1.036);transform-origin:left center;">Max. value:</span></div>
<div class="lbl" style="left:1452px;top:350.0px"><span>2147483647</span></div>
<div class="lbl" style="left:1333px;top:376.2px"><span style="display:inline-block;transform:scaleX(0.979);transform-origin:left center;">Access:</span></div>
<div class="lbl" style="left:1452px;top:376.2px"><span style="display:inline-block;transform:scaleX(0.923);transform-origin:left center;">RO</span></div>
<div class="lbl" style="left:1333px;top:402.4px"><span style="display:inline-block;transform:scaleX(1.031);transform-origin:left center;">Units:</span></div>
<div class="lbl" style="left:1452px;top:402.4px"><span style="display:inline-block;transform:scaleX(1.046);transform-origin:left center;">cnt</span></div>
<div class="t" style="left:1321px;top:563px;font-size:20px;color:#ececec"><span style="display:inline-block;transform:scaleX(0.973);transform-origin:left center;">Scope options</span></div>
<div class="lbl" style="left:1321px;top:601px"><span style="display:inline-block;transform:scaleX(0.935);transform-origin:left center;">Color</span></div>
<div class="abs" style="left:1479px;top:597px;width:22px;height:22px;background:#00ffff;border:1px solid #f4f4f4"></div>
<div class="btn" style="left:973px;top:798px;width:125px"><span style="display:inline-block;transform:scaleX(0.940);transform-origin:center center;">Cancel</span></div>
<div class="btn" style="left:1155px;top:798px;width:125px"><span style="display:inline-block;transform:scaleX(0.958);transform-origin:center center;">Apply</span></div>
<div class="abs" style="left:1662px;top:41px;width:1px;height:813px;background:#4c4c4c"></div>
<div class="abs" style="left:0;top:853px;width:1663px;height:1px;background:#4c4c4c"></div>
</body></html>
